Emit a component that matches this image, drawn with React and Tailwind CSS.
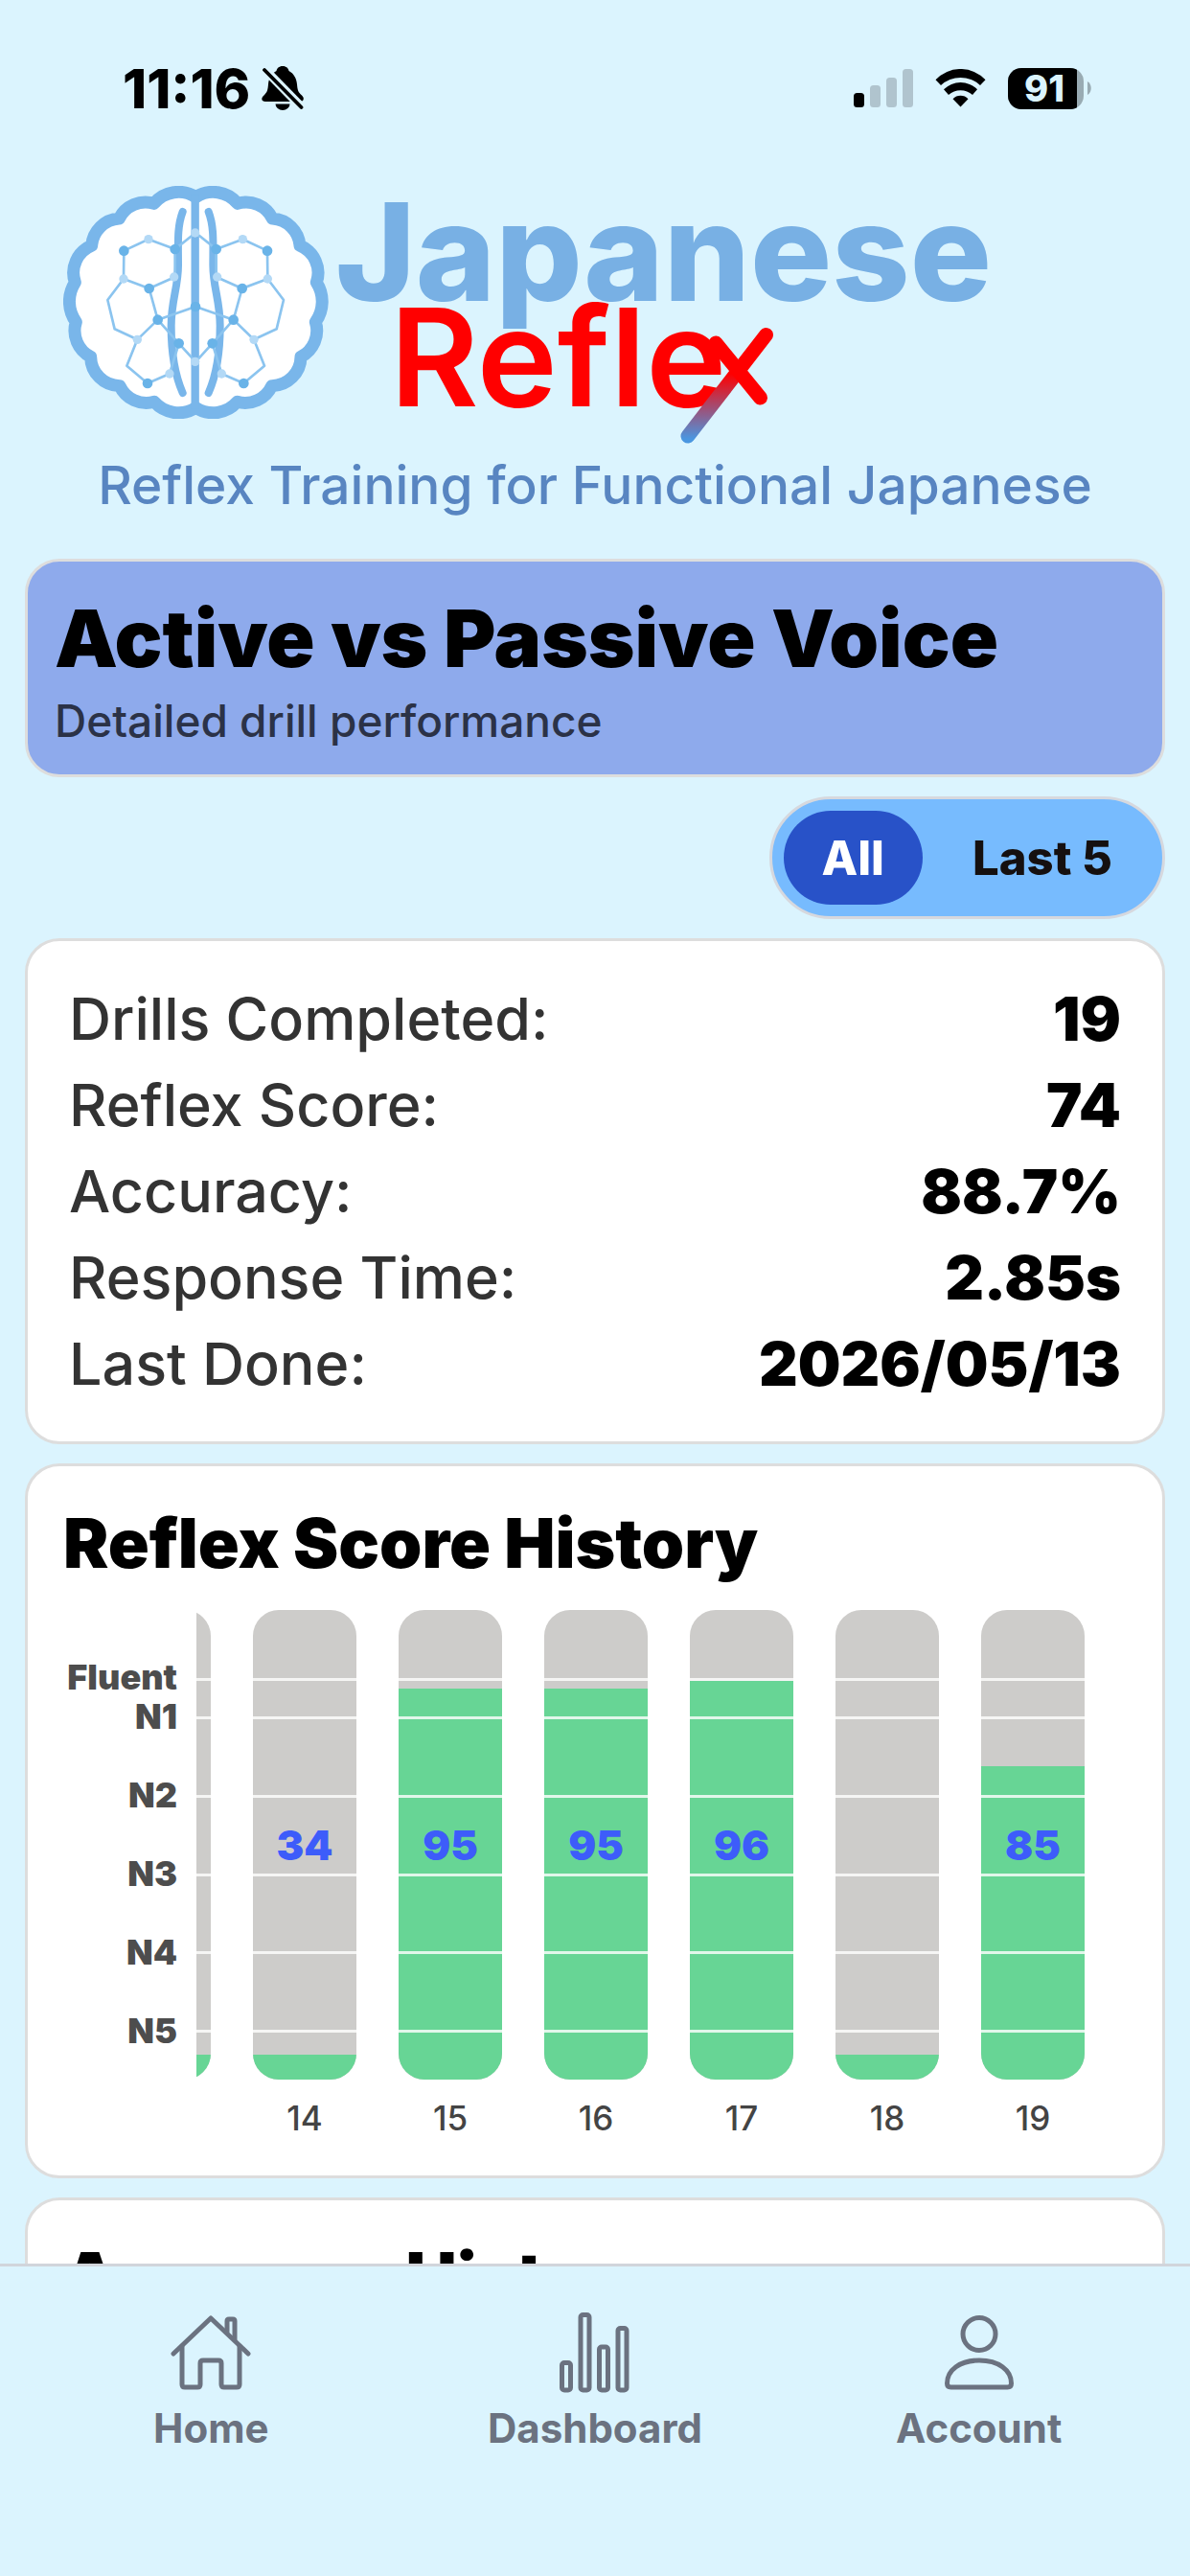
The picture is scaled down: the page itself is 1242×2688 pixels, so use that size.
import { useState } from "react";

const STATS = [
  { label: "Drills Completed:", value: "19" },
  { label: "Reflex Score:", value: "74" },
  { label: "Accuracy:", value: "88.7%" },
  { label: "Response Time:", value: "2.85s" },
  { label: "Last Done:", value: "2026/05/13" },
];

const DRILLS = [
  { id: 13, score: null },
  { id: 14, score: 34 },
  { id: 15, score: 95 },
  { id: 16, score: 95 },
  { id: 17, score: 96 },
  { id: 18, score: null },
  { id: 19, score: 85 },
];

// Level thresholds as reflex scores; the axis runs from 45 to 105
const LEVELS = [96, 91, 81, 71, 61, 51];

const toPercent = (score) => ((score - 45) / 60) * 100;
const fillPercent = (score) => Math.max(5.3, score ? toPercent(score) : 0);

function BellOff() {
  return (
    <svg width="44" height="47" viewBox="0 0 44 47" aria-hidden="true">
      <path d="M22 0c-4 0-6 2.500-6.500 5C10 8 7.500 13 7 19c-.5 6-1 8-4.500 11.500C-1.500 34 .5 37 4 37h36c3.500 0 5.500-3 2-6.500C38 27 37.500 25 37 19c-.5-6-3-11-8.500-14C28 2.500 26 0 22 0z" />
      <path d="M14.500 39.500h15a7.500 6.500 0 0 1-15 0z" />
      <path d="M1 1 42 43" stroke="#DBF4FE" strokeWidth="9" />
      <path d="M3 4 41.500 43" stroke="#000" strokeWidth="3.800" strokeLinecap="round" />
    </svg>
  );
}

function StatusBar() {
  return (
    <div className="flex h-[184px] items-center justify-between pl-[128px] pr-[103px]">
      <div className="flex items-center gap-3">
        <span className="text-[57px] leading-none font-extrabold">11:16</span>
        <BellOff />
      </div>
      <div className="flex items-center gap-[23px]">
        <svg width="62" height="40" viewBox="0 0 62 40" aria-hidden="true">
          <rect x="0" y="25" width="11" height="15" rx="3.500" />
          <g fill="#B0C4CE">
            <rect x="17" y="17" width="11" height="23" rx="3.500" />
            <rect x="34" y="9" width="11" height="31" rx="3.500" />
            <rect x="51" y="0" width="11" height="40" rx="3.500" />
          </g>
        </svg>
        <svg width="53" height="40" viewBox="0 0 53 40" aria-hidden="true">
          <path d="M.5 11.300A35.500 35.500 0 0 1 52.500 11.300L47 17A30 30 0 0 0 6 17z" />
          <path d="M9 21.300A24.600 24.600 0 0 1 44 21.300L39 27A19 19 0 0 0 14 27z" />
          <path d="M18.500 31.300A11 11 0 0 1 34.500 31.300L26.500 39.500z" />
        </svg>
        <div className="flex items-center gap-1">
          <div className="flex h-[43px] w-[79px] overflow-hidden rounded-[14px] bg-[#99ABB3]">
            <span className="flex w-[72px] items-center justify-center bg-black pl-1 text-[38px] leading-none font-extrabold text-[#DBF4FE]">
              91
            </span>
          </div>
          <svg width="4" height="14" viewBox="0 0 4 14" aria-hidden="true">
            <path d="M0 0c5 3 5 11 0 14z" fill="#99ABB3" />
          </svg>
        </div>
      </div>
    </div>
  );
}

const DARK_NODES = [[266, 275], [426, 270], [345, 393], [372, 491], [438, 565], [340, 690]];
const LIGHT_NODES = [[343, 239], [423, 357], [265, 363], [308, 553], [409, 660]];

function Hemisphere() {
  return (
    <g>
      <path
        d="M450 153C432 200 436 250 436 320S414 430 414 510S426 665 450 720"
        fill="none" stroke="#79B6EA" strokeWidth="24" strokeLinecap="round"
      />
      <g fill="none" stroke="#8BC4EF" strokeWidth="8" strokeLinejoin="round">
        <path d="M490 219 426 270 343 239 266 275 265 363 345 393 426 357V270" />
        <path d="M265 363 215 429 237 520 308 553 372 491 345 393" />
        <path d="M490 450 372 491 438 565 490 622" />
        <path d="M308 553 275 635 340 690 409 660 438 565" />
      </g>
      {DARK_NODES.map(([x, y]) => (
        <circle key={`${x}-${y}`} cx={x} cy={y} r="16" fill="#69B3E8" />
      ))}
      {LIGHT_NODES.map(([x, y]) => (
        <circle key={`${x}-${y}`} cx={x} cy={y} r="14" fill="#B3D9F6" />
      ))}
    </g>
  );
}

function BrainLogo() {
  return (
    <svg className="shrink-0" width="277" height="243" viewBox="76 72 831 729" aria-hidden="true">
      <path
        d="M491 107A100 100 0 0 1 622 127A92 92 0 0 1 731 174A92 92 0 0 1 817 259A92 92 0 0 1 869 374A110 110 0 0 1 866 498A92 92 0 0 1 820 607A92 92 0 0 1 729 698A92 92 0 0 1 621 748A100 100 0 0 1 491 766A100 100 0 0 1 361 748A92 92 0 0 1 253 698A92 92 0 0 1 162 607A92 92 0 0 1 116 498A110 110 0 0 1 113 374A92 92 0 0 1 165 259A92 92 0 0 1 251 174A92 92 0 0 1 360 127A100 100 0 0 1 491 107z"
        fill="#fff" stroke="#79B6EA" strokeWidth="39" strokeLinejoin="round"
      />
      <path d="M489 100V770" stroke="#79B6EA" strokeWidth="25" />
      <Hemisphere />
      <g transform="translate(981 0) scale(-1 1)">
        <Hemisphere />
      </g>
      <circle cx="490" cy="450" r="16" fill="#69B3E8" />
      <circle cx="489" cy="219" r="14" fill="#B3D9F6" />
      <circle cx="489" cy="622" r="14" fill="#B3D9F6" />
    </svg>
  );
}

function Header() {
  return (
    <header className="pt-[10px]">
      <div className="flex h-[280px] items-start pl-[66px]">
        <BrainLogo />
        <h1 className="mt-[13px] text-[142px] leading-[110px]">
          <span className="block pl-[7px] font-extrabold text-[#78B0E4]">Japanese</span>
          <span className="flex items-start pl-[64px] font-semibold text-[#FF0000]">
            Refle
            <svg className="-ml-[48px] mt-6 shrink-0" width="98" height="122" viewBox="708 341 98 122" role="img" aria-label="x">
              <defs>
                <linearGradient id="tail" gradientUnits="userSpaceOnUse" x1="0" y1="390" x2="0" y2="458">
                  <stop offset="0" stopColor="#FF0000" />
                  <stop offset="1" stopColor="#4A96E0" />
                </linearGradient>
              </defs>
              <g strokeWidth="15" strokeLinecap="round">
                <path d="M797.500 349.500 716 455" stroke="url(#tail)" />
                <path d="M745 358 791.500 415" stroke="#FF0000" />
              </g>
            </svg>
          </span>
        </h1>
      </div>
      <p className="text-center text-[55px] leading-[64px] font-medium text-[#5885C1]">
        Reflex Training for Functional Japanese
      </p>
    </header>
  );
}

function RangeToggle() {
  const [range, setRange] = useState("All");
  return (
    <div className="flex gap-3 self-end rounded-full border-[3px] border-[#D6D8DE] bg-[#77BBFE] p-3">
      {["All", "Last 5"].map((option) => (
        <button
          key={option}
          type="button"
          aria-pressed={range === option}
          onClick={() => setRange(option)}
          className={`h-[98px] rounded-full px-10 text-[49px] leading-none font-extrabold ${
            range === option ? "bg-[#2852C8] text-white" : "text-[#151010]"
          }`}
        >
          {option}
        </button>
      ))}
    </div>
  );
}

function Stats() {
  return (
    <dl className="rounded-[36px] border-[3px] border-[#DDDDDD] bg-white px-[43px] py-9">
      {STATS.map(({ label, value }) => (
        <div key={label} className="flex h-[90px] items-center justify-between leading-none">
          <dt className="text-[61px] font-medium text-[#333333]">{label}</dt>
          <dd className="text-[63px] font-black">{value}</dd>
        </div>
      ))}
    </dl>
  );
}

function Bar({ id, score }) {
  return (
    <div className="flex w-[108px] shrink-0 flex-col items-center">
      <div className="relative flex h-[490px] w-full flex-col justify-end overflow-hidden rounded-[27px] bg-[#CDCCCA]">
        <div className="bg-[#67D595]" style={{ height: `${fillPercent(score)}%` }} />
        {LEVELS.map((level) => (
          <div
            key={level}
            className="absolute inset-x-0 h-[3px] bg-white/80"
            style={{ bottom: `${toPercent(level)}%` }}
          />
        ))}
        {score && (
          <span className="absolute inset-0 flex items-center justify-center text-[43px] font-black text-[#3D5CFA]">
            {score}
          </span>
        )}
      </div>
      <span className="mt-[18px] text-[35px] leading-[44px] font-medium text-[#444444]">{id}</span>
    </div>
  );
}

function HistoryCard({ title, children }) {
  return (
    <section className="rounded-[36px] border-[3px] border-[#DDDDDD] bg-white px-[37px] py-[38px]">
      <h3 className="text-[71px] leading-[84px] font-black">{title}</h3>
      {children}
    </section>
  );
}

function ScoreChart() {
  return (
    <div className="mt-[28px] flex gap-5">
      <div className="w-[119px] shrink-0 pt-[50px] text-right text-[36px] font-black text-[#4D4D4D]">
        <div className="leading-[41px]">Fluent</div>
        <div className="mb-5 leading-[41px]">N1</div>
        {["N2", "N3", "N4", "N5"].map((level) => (
          <div key={level} className="leading-[82px]">{level}</div>
        ))}
      </div>
      <div className="flex min-w-0 flex-1 justify-end gap-[44px] overflow-hidden pr-[44px]">
        {DRILLS.map((drill) => (
          <Bar key={drill.id} {...drill} />
        ))}
      </div>
    </div>
  );
}

function HomeIcon() {
  return (
    <svg width="84" height="84" viewBox="0 -3 84 84" fill="none" stroke="currentColor" strokeWidth="5" strokeLinecap="round" strokeLinejoin="round" aria-hidden="true">
      <path d="M3 40 42 3 81 40" />
      <path d="M12 32V72q0 3 3 3H28q3 0 3-3V50q0-3 3-3H50q3 0 3 3V72q0 3 3 3H69q3 0 3-3V32" />
      <path d="M59 17V6q0-2 2-2h4q2 0 2 2V25" />
    </svg>
  );
}

function DashboardIcon() {
  return (
    <svg width="74" height="84" viewBox="0 0 74 84" fill="none" stroke="currentColor" strokeWidth="5" aria-hidden="true">
      <rect x="2.500" y="52.500" width="9" height="28.500" rx="2.500" />
      <rect x="22" y="2.500" width="9" height="78.500" rx="2.500" />
      <rect x="41.500" y="36" width="9" height="45" rx="2.500" />
      <rect x="61" y="16.500" width="9" height="64.500" rx="2.500" />
    </svg>
  );
}

function AccountIcon() {
  return (
    <svg width="76" height="84" viewBox="0 -3 76 84" fill="none" stroke="currentColor" strokeWidth="5" strokeLinejoin="round" aria-hidden="true">
      <circle cx="38" cy="19.500" r="17" />
      <path d="M4.500 71C4.500 57 18 47 38 47S71.500 57 71.500 71q0 4-4 4H8.500q-4 0-4-4z" />
    </svg>
  );
}

const TABS = [
  { label: "Home", Icon: HomeIcon },
  { label: "Dashboard", Icon: DashboardIcon },
  { label: "Account", Icon: AccountIcon },
];

function TabBar() {
  return (
    <nav className="grid h-[326px] shrink-0 grid-cols-3 border-t-[3px] border-[#D1D5DB] px-5 pt-12">
      {TABS.map(({ label, Icon }) => (
        <a key={label} href="#" className="flex flex-col items-center gap-3 self-start text-[#6B7280]">
          <Icon />
          <span className="text-[42px] leading-[50px] font-bold">{label}</span>
        </a>
      ))}
    </nav>
  );
}

export default function App() {
  return (
    <div className="flex h-screen flex-col overflow-hidden bg-[#DBF4FE] font-['Inter',sans-serif] text-black">
      <main className="min-h-0 flex-1 overflow-hidden">
        <StatusBar />
        <Header />
        <div className="mt-[45px] flex flex-col gap-5 px-[26px]">
          <section className="rounded-[36px] border-[3px] border-[#DDDDDD] bg-[#8EAAEC] px-7 pt-[38px] pb-7">
            <h2 className="text-[83px] leading-[84px] font-black">Active vs Passive Voice</h2>
            <p className="mt-4 text-[46px] leading-[56px] font-medium text-[#2B3247]">Detailed drill performance</p>
          </section>
          <RangeToggle />
          <Stats />
          <HistoryCard title="Reflex Score History">
            <ScoreChart />
          </HistoryCard>
          <HistoryCard title="Accuracy History" />
        </div>
      </main>
      <TabBar />
    </div>
  );
}
